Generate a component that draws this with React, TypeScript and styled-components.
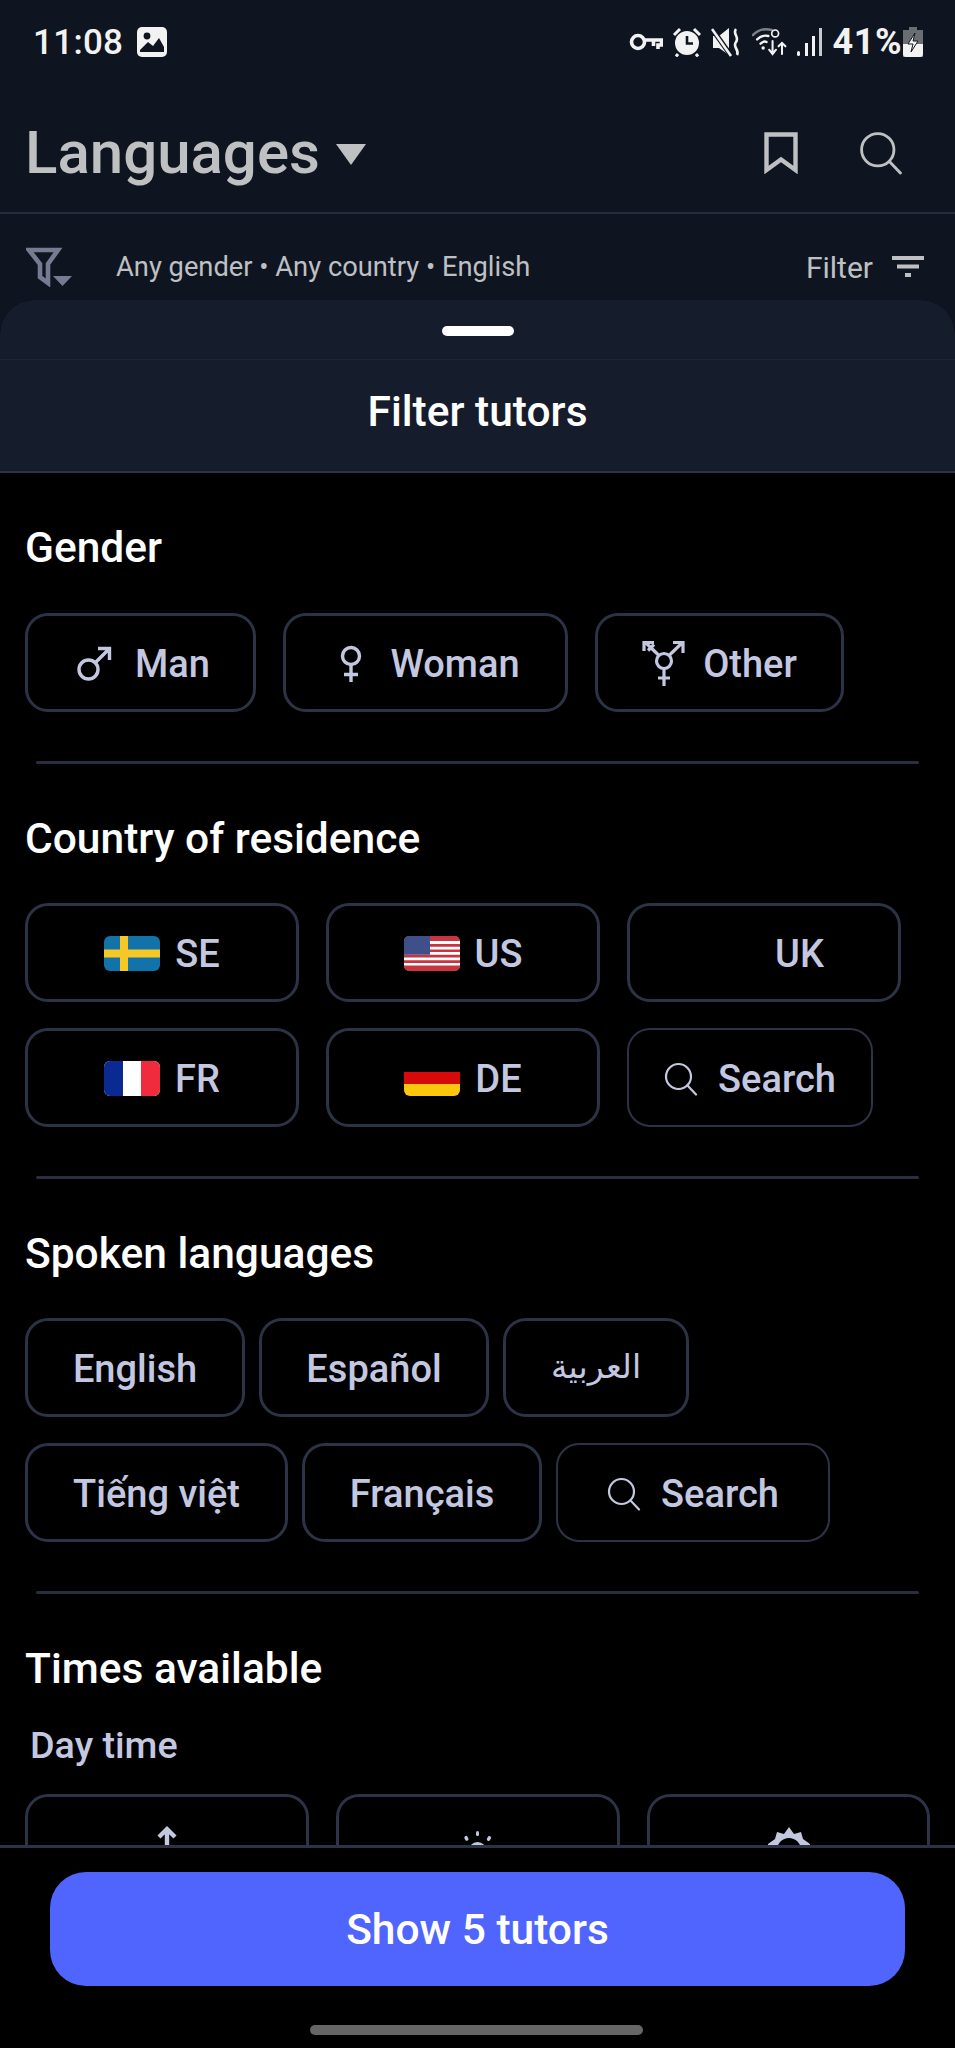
import React from 'react';
import styled, { createGlobalStyle } from 'styled-components';

const GlobalStyle = createGlobalStyle`
  html, body {
    margin: 0;
    padding: 0;
    background: #000;
  }
  * {
    box-sizing: border-box;
  }
`;

const Screen = styled.div`
  width: 955px;
  height: 2048px;
  display: flex;
  flex-direction: column;
  overflow: hidden;
  background: #0f1520;
  font-family: Roboto, 'Noto Sans', sans-serif;
`;

const StatusBar = styled.div`
  height: 84px;
  padding: 0 32px 0 33px;
  display: flex;
  align-items: center;
  justify-content: space-between;
  color: #f2f2f2;
`;

const StatusGroup = styled.div<{ $gap: number }>`
  display: flex;
  align-items: center;
  gap: ${(props) => props.$gap}px;
`;

const Clock = styled.span`
  font-size: 35px;
  font-weight: 500;
  letter-spacing: 0.3px;
`;

const Battery = styled.span`
  font-size: 36px;
  font-weight: 700;
  margin-left: 1px;
  margin-right: -8px;
  letter-spacing: 0.5px;
`;

const TitleBar = styled.div`
  height: 130px;
  padding: 10px 52px 0 25px;
  display: flex;
  align-items: center;
  justify-content: space-between;
  border-bottom: 2px solid #252b3a;
`;

const TitleGroup = styled.div`
  display: flex;
  align-items: center;
  gap: 16px;
`;

const Title = styled.h1`
  margin: 0;
  font-size: 60px;
  font-weight: 500;
  line-height: 66px;
  color: #bfc0c2;
`;

const Caret = styled.span`
  width: 0;
  height: 0;
  margin-top: 3px;
  border-left: 15px solid transparent;
  border-right: 15px solid transparent;
  border-top: 21px solid #bfc0c2;
`;

const HeaderActions = styled.div`
  display: flex;
  align-items: center;
  gap: 61px;
`;

const FilterBar = styled.div`
  height: 88px;
  padding: 18px 31px 0 26px;
  display: flex;
  align-items: center;
  justify-content: space-between;
`;

const FilterSummary = styled.div`
  display: flex;
  align-items: center;
  gap: 44px;
`;

const SummaryText = styled.span`
  font-size: 27.3px;
  color: #bfc0c4;
`;

const FilterAction = styled.div`
  display: flex;
  align-items: center;
  gap: 19px;
  font-size: 30px;
  color: #bfc0c4;
`;

const Sheet = styled.div`
  flex: 1;
  min-height: 0;
  display: flex;
  flex-direction: column;
  border-radius: 34px 34px 0 0;
  overflow: hidden;
  background: #000;
  margin-top: -2px;
`;

const GrabArea = styled.div`
  height: 60px;
  background: #151c2b;
  border-bottom: 1px solid #1f2636;
  display: flex;
  justify-content: center;
  padding-top: 26px;
`;

const Grabber = styled.div`
  width: 72px;
  height: 10px;
  border-radius: 5px;
  background: #fff;
`;

const SheetHeader = styled.div`
  height: 113px;
  padding-bottom: 9px;
  background: #151c2b;
  border-bottom: 2px solid #2c3346;
  display: flex;
  align-items: center;
  justify-content: center;
  font-size: 42.5px;
  font-weight: 500;
  color: #fff;
`;

const ScrollArea = styled.div`
  flex: 1;
  min-height: 0;
  overflow: hidden;
  padding: 51px 25px 0;
`;

const SectionTitle = styled.h2`
  margin: 0;
  font-size: 42.5px;
  font-weight: 500;
  line-height: 48px;
  color: #fff;
`;

const SubTitle = styled.h3`
  margin: 31px 0 0 5px;
  font-size: 37.7px;
  font-weight: 500;
  line-height: 42px;
  color: #c3c8e0;
`;

const ChipRow = styled.div<{ $gap: number; $top?: number }>`
  display: flex;
  gap: ${(props) => props.$gap}px;
  margin-top: ${(props) => props.$top ?? 26}px;
`;

const Chip = styled.div<{ $width: number; $gap?: number; $shift?: number }>`
  width: ${(props) => props.$width}px;
  height: 99px;
  flex-shrink: 0;
  display: flex;
  align-items: center;
  justify-content: center;
  gap: ${(props) => props.$gap ?? 15}px;
  padding: 2px 0 0 ${(props) => props.$shift ?? 0}px;
  border: 3px solid #2d3347;
  border-radius: 23px;
  font-size: 38px;
  font-weight: 500;
  color: #c3c8e0;
`;

const SearchChip = styled(Chip)`
  border-width: 2px;
`;

const ArabicLabel = styled.span`
  font-family: 'Noto Sans', 'DejaVu Sans', sans-serif;
  font-weight: 400;
  font-size: 33px;
  margin-top: -6px;
`;

const FlagSlot = styled.span`
  width: 56px;
  height: 35px;
  display: block;
`;

const TimeChip = styled(Chip)`
  align-items: flex-start;
  padding-top: 28px;
`;

const Rule = styled.div`
  height: 3px;
  margin: 49px 11px 51px;
  background: #292f40;
  border-radius: 2px;
`;

const Footer = styled.div`
  height: 203px;
  flex-shrink: 0;
  border-top: 3px solid #2d3347;
  padding: 24px 50px 0;
  position: relative;
`;

const ShowButton = styled.div`
  height: 114px;
  border-radius: 36px;
  background: #5064fe;
  display: flex;
  align-items: center;
  justify-content: center;
  font-size: 42.5px;
  font-weight: 500;
  color: #fff;
`;

const HomeBar = styled.div`
  position: absolute;
  left: 310px;
  bottom: 13px;
  width: 333px;
  height: 10px;
  border-radius: 5px;
  background: #666;
`;

const Flag: React.FC<{ children: React.ReactNode }> = ({ children }) => (
  <FlagSlot>
    <svg width="56" height="35" viewBox="0 0 56 35">
      {children}
    </svg>
  </FlagSlot>
);

const SearchIcon: React.FC<{ size?: number; color?: string }> = ({ size = 34, color = '#c3c8e0' }) => (
  <svg width={size} height={size} viewBox="0 0 34 34" fill="none" stroke={color} strokeWidth="2.2" strokeLinecap="round">
    <circle cx="14.5" cy="14.5" r="12.5" />
    <path d="M23.5 23.5 32 32.5" />
  </svg>
);

const MaleIcon = () => (
  <svg width="36" height="36" viewBox="0 0 36 36" fill="none" stroke="#c3c8e0" strokeWidth="3.4">
    <circle cx="12.5" cy="23.5" r="9.5" />
    <path d="M19.5 16.5 33 3M22 2.5h11.5V14" />
  </svg>
);

const FemaleIcon = () => (
  <svg width="26" height="38" viewBox="0 0 26 38" fill="none" stroke="#c3c8e0" strokeWidth="3.4">
    <circle cx="13" cy="11" r="8.5" />
    <path d="M13 20v17M6 29.5h14" />
  </svg>
);

const TransIcon = () => (
  <svg width="44" height="46" viewBox="0 0 44 46" fill="none" stroke="#c3c8e0" strokeWidth="3.2">
    <circle cx="22" cy="20" r="7.5" />
    <path d="M22 27.5V45M16 37h12M27 14.5 40 2M31 1.500h10V12M17 14.500 4 2M2 10V1.500h10M6 9.500l6-6" />
  </svg>
);

const UpArrow = () => (
  <svg width="24" height="28" viewBox="0 0 24 28" fill="none" stroke="#c3c8e0" strokeWidth="4.4">
    <path d="M12 27V4M4 12l8-8 8 8" />
  </svg>
);

const SmallSun = () => (
  <svg width="44" height="34" viewBox="0 0 44 34" fill="#c3c8e0">
    <rect x="20" y="6" width="3" height="5" rx="1.500" />
    <rect x="8.500" y="11" width="3.400" height="5" rx="1.700" transform="rotate(-30 10 13)" />
    <rect x="31.500" y="11" width="3.400" height="5" rx="1.700" transform="rotate(30 33 13)" />
    <circle cx="21.500" cy="26" r="9" />
  </svg>
);

const BigSun = () => (
  <svg width="64" height="34" viewBox="0 0 64 34">
    <path d="M32 2 37 9 44 7 46 14 53 19V24H11V19L18 14 20 7 27 9Z" fill="#c3c8e0" />
    <circle cx="32" cy="25" r="12" fill="#000" />
  </svg>
);

const App: React.FC = () => (
  <>
    <GlobalStyle />
    <Screen>
      <StatusBar>
        <StatusGroup $gap={14}>
          <Clock>11:08</Clock>
          <svg width="30" height="30" viewBox="0 0 30 30">
            <rect width="30" height="30" rx="5" fill="#f2f2f2" />
            <circle cx="10" cy="9" r="3.400" fill="#0f1520" />
            <path d="M3 23 11 15 16 19 22 11 27 20V25H3Z" fill="#0f1520" />
          </svg>
        </StatusGroup>
        <StatusGroup $gap={9}>
          <svg width="34" height="22" viewBox="0 0 34 22" fill="none" stroke="#f2f2f2" strokeWidth="3.600">
            <circle cx="9" cy="11" r="6.500" />
            <path d="M15.500 9H32.500V14H29V18M24.500 9V15" />
          </svg>
          <svg width="30" height="30" viewBox="0 0 30 30" fill="#f2f2f2">
            <circle cx="15" cy="16" r="12" />
            <path d="M15 9v7.500h6" fill="none" stroke="#0f1520" strokeWidth="2.600" />
            <path d="M2 8 8 2M28 8 22 2M6 27 4 29.500M24 27 26 29.500" fill="none" stroke="#f2f2f2" strokeWidth="3" />
          </svg>
          <svg width="32" height="30" viewBox="0 0 32 30" fill="none">
            <path d="M2 9H8L18 1V28L8 21H2Z" fill="#f2f2f2" />
            <path d="M-1 -1 21 30" stroke="#0f1520" strokeWidth="5" />
            <path d="M1 2 20 29" stroke="#f2f2f2" strokeWidth="2.600" />
            <path d="M25 2C21 7 29 10 25 15S29 23 26 28" stroke="#f2f2f2" strokeWidth="2.600" />
          </svg>
          <svg width="36" height="30" viewBox="0 0 42 34" fill="none" strokeLinecap="round">
            <path d="M1 9C8 2 16 1 23 3" stroke="#7c7f85" strokeWidth="3" />
            <path d="M6 14C10 10 15 9 19 10" stroke="#f2f2f2" strokeWidth="2.800" />
            <path d="M10 19C12 17 15 16 17 17" stroke="#f2f2f2" strokeWidth="2.800" />
            <circle cx="13" cy="24" r="2" fill="#f2f2f2" />
            <circle cx="27" cy="7" r="4" stroke="#f2f2f2" strokeWidth="2" />
            <path d="M24 16V31M20 26l4 5 4-5M35 31V18M31 22l4-4 4 4" stroke="#f2f2f2" strokeWidth="2.400" />
          </svg>
          <svg width="26" height="30" viewBox="0 0 26 30" fill="#f2f2f2">
            <rect x="0" y="24" width="3" height="5" rx="1.500" />
            <rect x="8" y="16" width="3" height="13" />
            <rect x="15" y="9" width="3" height="20" />
            <rect x="22" y="1" width="3" height="28" fill="#c8c9cc" />
          </svg>
          <Battery>41%</Battery>
          <svg width="20" height="30" viewBox="0 0 20 30">
            <path d="M6 0H14V3H20V30H0V3H6Z" fill="#6a6d72" />
            <path d="M0 17H20V27a3 3 0 0 1-3 3H3a3 3 0 0 1-3-3Z" fill="#f2f2f2" />
            <path d="M12 6 5 17H10L8 25 15 14H10Z" fill="#f2f2f2" stroke="#0f1520" strokeWidth="1" />
          </svg>
        </StatusGroup>
      </StatusBar>

      <TitleBar>
        <TitleGroup>
          <Title>Languages</Title>
          <Caret />
        </TitleGroup>
        <HeaderActions>
          <svg width="34" height="42" viewBox="0 0 34 42" fill="none" stroke="#bfc0c2" strokeWidth="4.400">
            <path d="M2.500 2.500H31.500V38L17 27.500 2.500 38Z" />
          </svg>
          <SearchIcon size={44} color="#bfc0c2" />
        </HeaderActions>
      </TitleBar>

      <FilterBar>
        <FilterSummary>
          <svg width="46" height="40" viewBox="0 0 46 40">
            <path d="M3 3H32L22 17V36L14 30V17Z" fill="none" stroke="#757b91" strokeWidth="4.600" />
            <path d="M27 29H46L36.500 39Z" fill="#757b91" />
          </svg>
          <SummaryText>Any gender • Any country • English</SummaryText>
        </FilterSummary>
        <FilterAction>
          Filter
          <svg width="32" height="22" viewBox="0 0 32 22" fill="#bfc0c4">
            <rect x="0" y="0" width="32" height="4" />
            <rect x="5" y="8.500" width="22" height="4" />
            <rect x="13" y="17" width="6" height="4" />
          </svg>
        </FilterAction>
      </FilterBar>

      <Sheet>
        <GrabArea>
          <Grabber />
        </GrabArea>
        <SheetHeader>Filter tutors</SheetHeader>
        <ScrollArea>
          <SectionTitle>Gender</SectionTitle>
          <ChipRow $gap={27} $top={41}>
            <Chip $width={231} $gap={23} $shift={5}>
              <MaleIcon />
              Man
            </Chip>
            <Chip $width={285} $gap={26} $shift={7}>
              <FemaleIcon />
              Woman
            </Chip>
            <Chip $width={249} $gap={17}>
              <TransIcon />
              Other
            </Chip>
          </ChipRow>
          <Rule />

          <SectionTitle>Country of residence</SectionTitle>
          <ChipRow $gap={27} $top={40}>
            <Chip $width={274}>
              <Flag>
                <rect width="56" height="35" rx="6" fill="#1273ab" />
                <rect x="16" width="8" height="35" fill="#f7c825" />
                <rect y="13.500" width="56" height="8" fill="#f7c825" />
              </Flag>
              SE
            </Chip>
            <Chip $width={274}>
              <Flag>
                <rect width="56" height="35" rx="6" fill="#fff" />
                <path d="M0 5a5 5 0 0 1 5-5h46a5 5 0 0 1 5 5H0ZM0 8h56v2.700H0ZM0 13.400h56v2.700H0ZM0 18.800h56v2.700H0ZM0 24.200h56v2.700H0ZM0 29.600h56v.4a5 5 0 0 1-5 5H5a5 5 0 0 1-5-5Z" fill="#c8343f" />
                <path d="M0 5a5 5 0 0 1 5-5h21v18.800H0Z" fill="#3f4f8a" />
              </Flag>
              US
            </Chip>
            <Chip $width={274}>
              <FlagSlot />
              UK
            </Chip>
          </ChipRow>
          <ChipRow $gap={27}>
            <Chip $width={274}>
              <Flag>
                <rect width="56" height="35" rx="6" fill="#fff" />
                <path d="M19 0H6a6 6 0 0 0-6 6V29a6 6 0 0 0 6 6H19Z" fill="#0a2a91" />
                <path d="M37 0H50a6 6 0 0 1 6 6V29a6 6 0 0 1-6 6H37Z" fill="#ef2b3d" />
              </Flag>
              FR
            </Chip>
            <Chip $width={274}>
              <Flag>
                <rect y="11" width="56" height="12" fill="#d60a0a" />
                <path d="M0 23H56V29a6 6 0 0 1-6 6H6a6 6 0 0 1-6-6Z" fill="#fbc70d" />
              </Flag>
              DE
            </Chip>
            <SearchChip $width={246} $gap={20}>
              <SearchIcon />
              Search
            </SearchChip>
          </ChipRow>
          <Rule />

          <SectionTitle>Spoken languages</SectionTitle>
          <ChipRow $gap={14} $top={40}>
            <Chip $width={220}>English</Chip>
            <Chip $width={230}>Español</Chip>
            <Chip $width={186}>
              <ArabicLabel>العربية</ArabicLabel>
            </Chip>
          </ChipRow>
          <ChipRow $gap={14}>
            <Chip $width={263}>Tiếng việt</Chip>
            <Chip $width={240}>Français</Chip>
            <SearchChip $width={274} $gap={20}>
              <SearchIcon />
              Search
            </SearchChip>
          </ChipRow>
          <Rule />

          <SectionTitle>Times available</SectionTitle>
          <SubTitle>Day time</SubTitle>
          <ChipRow $gap={27} $top={28}>
            <TimeChip $width={284}>
              <UpArrow />
            </TimeChip>
            <TimeChip $width={284}>
              <SmallSun />
            </TimeChip>
            <TimeChip $width={283}>
              <BigSun />
            </TimeChip>
          </ChipRow>
        </ScrollArea>
        <Footer>
          <ShowButton>Show 5 tutors</ShowButton>
          <HomeBar />
        </Footer>
      </Sheet>
    </Screen>
  </>
);

export default App;
